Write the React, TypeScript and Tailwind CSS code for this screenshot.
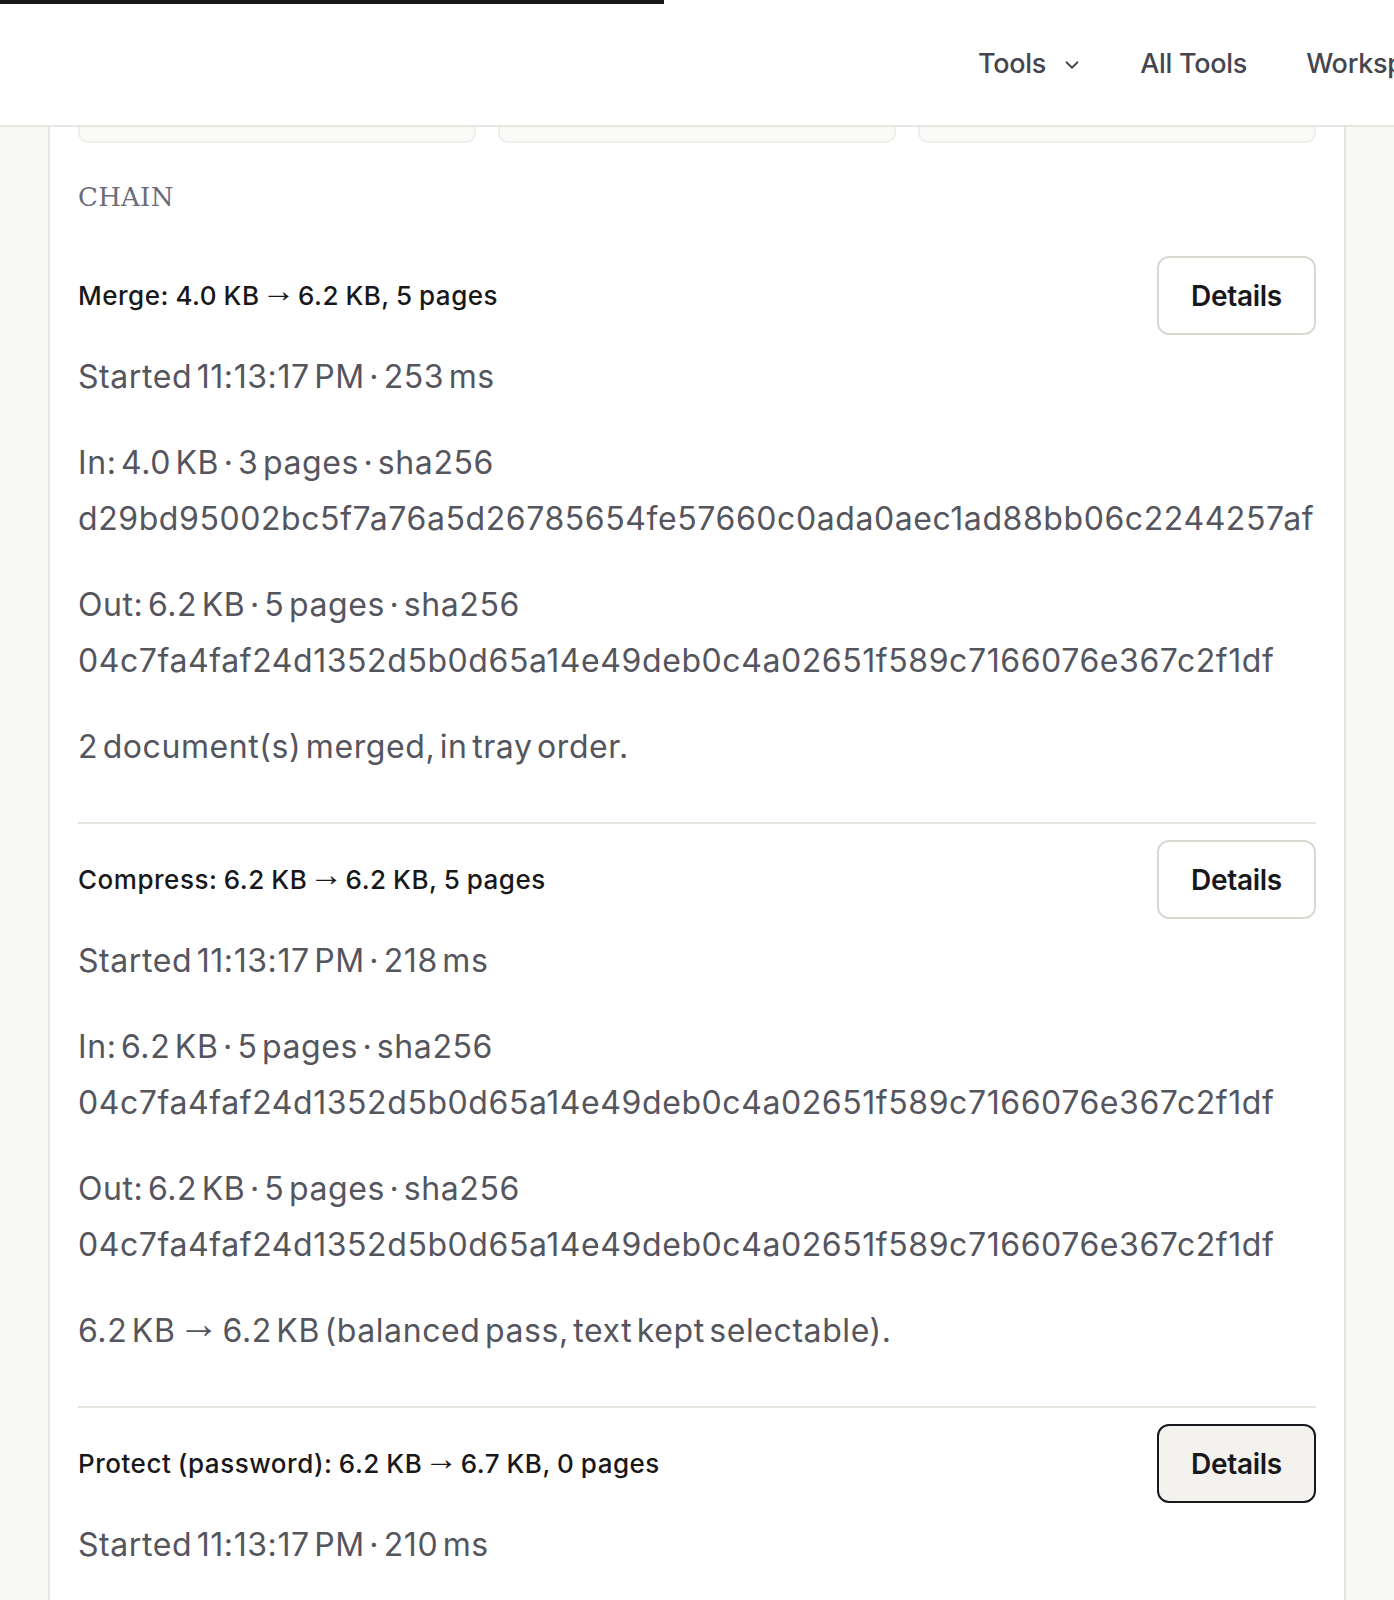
import { ChevronDown } from "lucide-react";

type Step = {
  title: string;
  started: string;
  duration: string;
  input: { size: string; pages: number; hash: string };
  output: { size: string; pages: number; hash: string };
  note?: string;
  active?: boolean;
};

const steps: Step[] = [
  {
    title: "Merge: 4.0 KB → 6.2 KB, 5 pages",
    started: "11:13:17 PM",
    duration: "253 ms",
    input: {
      size: "4.0 KB",
      pages: 3,
      hash: "d29bd95002bc5f7a76a5d26785654fe57660c0ada0aec1ad88bb06c2244257af",
    },
    output: {
      size: "6.2 KB",
      pages: 5,
      hash: "04c7fa4faf24d1352d5b0d65a14e49deb0c4a02651f589c7166076e367c2f1df",
    },
    note: "2 document(s) merged, in tray order.",
  },
  {
    title: "Compress: 6.2 KB → 6.2 KB, 5 pages",
    started: "11:13:17 PM",
    duration: "218 ms",
    input: {
      size: "6.2 KB",
      pages: 5,
      hash: "04c7fa4faf24d1352d5b0d65a14e49deb0c4a02651f589c7166076e367c2f1df",
    },
    output: {
      size: "6.2 KB",
      pages: 5,
      hash: "04c7fa4faf24d1352d5b0d65a14e49deb0c4a02651f589c7166076e367c2f1df",
    },
    note: "6.2 KB → 6.2 KB (balanced pass, text kept selectable).",
  },
  {
    title: "Protect (password): 6.2 KB → 6.7 KB, 0 pages",
    started: "11:13:17 PM",
    duration: "210 ms",
    input: {
      size: "6.2 KB",
      pages: 5,
      hash: "04c7fa4faf24d1352d5b0d65a14e49deb0c4a02651f589c7166076e367c2f1df",
    },
    output: {
      size: "6.7 KB",
      pages: 0,
      hash: "9a1e3c0f5b7d2e4a6c8b0d1f3e5a7c9b2d4f6a8c0e1b3d5f7a9c2e4b6d8f0a1c",
    },
    active: true,
  },
];

// Thin arrow glyph from a font whose → is lighter than the body face
function WithArrows({ text }: { text: string }) {
  const parts = text.split(" → ");
  return (
    <>
      {parts.map((p, i) => (
        <span key={i}>
          {p}
          {i < parts.length - 1 && (
            <span className="relative top-[-0.09em] mx-[0.06em] font-['Liberation_Sans'] font-normal text-[1.3em] leading-none">
              →
            </span>
          )}
        </span>
      ))}
    </>
  );
}

function StepRow({ step, first }: { step: Step; first: boolean }) {
  return (
    <div className={first ? "pb-[47px]" : "border-t-2 border-[#e6e6e1] pt-[16px] pb-[47px]"}>
      {/* Header row */}
      <div className="flex items-center justify-between">
        <p className="text-[26px] font-medium text-[#18181b] tracking-[0.02em] [word-spacing:-1px]">
          <WithArrows text={step.title} />
        </p>
        <button
          className={
            step.active
              ? "w-[159px] h-[79px] rounded-[12px] border-2 border-[#18181b] bg-[#f3f2ef] text-[28px] font-semibold text-[#18181b] tracking-[-0.01em]"
              : "w-[159px] h-[79px] rounded-[12px] border-2 border-[#d9d9d1] bg-white text-[28px] font-semibold text-[#18181b] tracking-[-0.01em]"
          }
        >
          Details
        </button>
      </div>

      {/* Body */}
      <div className="mt-[14px] flex flex-col gap-[30px] text-[32px] leading-[56px] text-[#55555e] tracking-[0.018em] [word-spacing:-5px] whitespace-nowrap">
        <p>
          Started {step.started} · {step.duration}
        </p>
        <p>
          <span className="block">
            In: {step.input.size} · {step.input.pages} pages · sha256
          </span>
          <span className="block">{step.input.hash}</span>
        </p>
        <p>
          <span className="block">
            Out: {step.output.size} · {step.output.pages} pages · sha256
          </span>
          <span className="block">{step.output.hash}</span>
        </p>
        {step.note && (
          <p>
            <WithArrows text={step.note} />
          </p>
        )}
      </div>
    </div>
  );
}

export default function App() {
  return (
    <div className="min-h-screen bg-[#f9f9f7] overflow-hidden font-[Inter,sans-serif]">
      {/* Top bar */}
      <header className="bg-white border-b-2 border-[#e6e6e1]">
        <div className="h-1 w-[664px] bg-[#18181b]" />
        <nav className="h-[121px] flex items-center pl-[978px] text-[27px] font-medium text-[#45454f] tracking-[-0.01em] whitespace-nowrap">
          <span className="flex items-center">
            Tools
            <ChevronDown className="ml-[15px] w-[22px] h-[22px]" strokeWidth={2} />
          </span>
          <span className="ml-[57px]">All Tools</span>
          <span className="ml-[59px]">Workspace</span>
        </nav>
      </header>

      {/* Panel */}
      <main className="mx-[48px] border-x-2 border-[#e6e6e1] bg-white px-[28px] pb-10">
        {/* Stat cards, tail visible under the header */}
        <div className="grid grid-cols-3 gap-[22px]">
          <div className="h-[16px] rounded-b-[10px] border-2 border-t-0 border-[#eeeeea] bg-[#fafaf8]" />
          <div className="h-[16px] rounded-b-[10px] border-2 border-t-0 border-[#eeeeea] bg-[#fafaf8]" />
          <div className="h-[16px] rounded-b-[10px] border-2 border-t-0 border-[#eeeeea] bg-[#fafaf8]" />
        </div>

        <h2 className="mt-[38px] mb-[43px] text-[26px] leading-[32px] font-['DejaVu_Serif',serif] text-[#6b6b78] tracking-[0.01em]">
          CHAIN
        </h2>

        <div>
          {steps.map((s, i) => (
            <StepRow key={s.title} step={s} first={i === 0} />
          ))}
        </div>
      </main>
    </div>
  );
}
